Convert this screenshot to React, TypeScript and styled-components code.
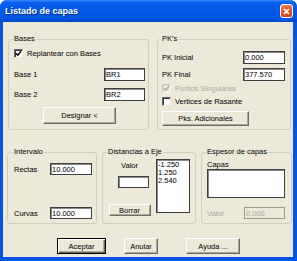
import styled, { createGlobalStyle } from 'styled-components'

const GlobalStyle = createGlobalStyle`
    html, body {
        margin: 0;
        padding: 0;
        background: #ffffff;
    }
    body {
        font-family: "Liberation Sans", Arial, sans-serif;
        font-size: 7.5px;
        line-height: 9px;
        color: #000;
    }
`

const Window = styled.div`
    width: 297px;
    height: 261px;
    box-sizing: border-box;
    display: flex;
    flex-direction: column;
    background: #0055e5;
    border-radius: 7px 7px 0 0;
    overflow: hidden;
`

const TitleBar = styled.div`
    height: 22px;
    flex-shrink: 0;
    display: flex;
    align-items: center;
    justify-content: space-between;
    padding: 0 4px 0 5px;
    background: linear-gradient(180deg, #3b8cff 0%, #0c62ee 10%, #0058e6 45%, #0055e3 85%, #0047cc 100%);
`

const Title = styled.span`
    color: #fff;
    font-weight: bold;
    font-size: 9px;
    line-height: 11px;
    text-shadow: 1px 1px 0 #0a2a8a;
`

const CloseButton = styled.div`
    width: 13px;
    height: 14px;
    box-sizing: border-box;
    border: 1px solid #fff;
    border-radius: 3px;
    background: linear-gradient(160deg, #f08a63 0%, #e0562c 50%, #c63d17 100%);
    display: flex;
    align-items: center;
    justify-content: center;
`

const Body = styled.div`
    flex: 1;
    margin: 0 4px 4px 3px;
    background: #ece9d8;
    display: flex;
    flex-direction: column;
    padding: 13px 0 0;
`

const TopRow = styled.div`
    display: flex;
    gap: 8px;
    padding-left: 5px;
`

const MidRow = styled.div`
    display: grid;
    grid-template-columns: 90px 94px 91px;
    column-gap: 5px;
    padding-left: 4px;
    margin-top: 18px;
`

const ButtonRow = styled.div`
    display: flex;
    padding-left: 54px;
    margin-top: 14px;
`

const Group = styled.fieldset<{ $w?: number; $pl: number; $pr: number; $pb: number }>`
    margin: 0;
    ${p => (p.$w ? `width: ${p.$w}px;` : '')}
    box-sizing: border-box;
    min-width: 0;
    padding: 0 ${p => p.$pr}px ${p => p.$pb}px ${p => p.$pl}px;
    border: 1px solid #d0d0bf;
    border-radius: 3px;
    display: flex;
    flex-direction: column;
`

const Legend = styled.legend`
    padding: 0 1px;
    margin-left: -1px;
    line-height: 8px;
`

const FieldRow = styled.div<{ $mt: number; $center?: boolean }>`
    display: flex;
    align-items: center;
    justify-content: ${p => (p.$center ? 'center' : 'space-between')};
    margin-top: ${p => p.$mt}px;
`

const Label = styled.span<{ $disabled?: boolean }>`
    color: ${p => (p.$disabled ? '#aca899' : '#000')};
    white-space: nowrap;
`

const TextBox = styled.input<{ $w: number; $h: number; $mt?: number; $ml?: number }>`
    width: ${p => p.$w}px;
    height: ${p => p.$h}px;
    margin: ${p => p.$mt ?? 0}px 0 0 ${p => p.$ml ?? 0}px;
    box-sizing: border-box;
    padding: 0 1px;
    font: inherit;
    color: #000;
    background: #fff;
    border: 1px solid #3f3f3f;
    box-shadow: inset 1px 1px 0 #8a8a8a;
    outline: none;

    &:disabled {
        background: #ece9d8;
        color: #aca899;
        border-color: #9d9a8c;
        box-shadow: none;
    }
`

const CheckRow = styled.label<{ $mt: number; $disabled?: boolean }>`
    display: flex;
    align-items: center;
    gap: 4px;
    margin-top: ${p => p.$mt}px;
    color: ${p => (p.$disabled ? '#aca899' : '#000')};
    white-space: nowrap;
`

const CheckBox = styled.span<{ $disabled?: boolean }>`
    width: 9px;
    height: 9px;
    box-sizing: border-box;
    flex-shrink: 0;
    display: flex;
    align-items: center;
    justify-content: center;
    background: ${p => (p.$disabled ? '#ece9d8' : '#fff')};
    border: 1px solid;
    border-color: ${p => (p.$disabled ? '#c9c6b8 #f5f4ee #f5f4ee #c9c6b8' : '#6a6a6a #e6e6e6 #e6e6e6 #6a6a6a')};
    box-shadow: inset 1px 1px 0 ${p => (p.$disabled ? '#dcd9cc' : '#3a3a3a')};
`

const Button = styled.div<{ $w: number; $h: number; $mt?: number; $ml?: number; $default?: boolean }>`
    width: ${p => p.$w}px;
    height: ${p => p.$h}px;
    margin: ${p => p.$mt ?? 0}px 0 0 ${p => p.$ml ?? 0}px;
    box-sizing: border-box;
    flex-shrink: 0;
    display: flex;
    align-items: center;
    justify-content: center;
    background: #ece9d8;
    border: 1px solid;
    border-color: ${p => (p.$default ? '#000' : '#fff #6e6c62 #6e6c62 #fff')};
    box-shadow: ${p =>
        p.$default
            ? 'inset 1px 1px 0 #fff, inset -1px -1px 0 #6e6c62, inset -2px -2px 0 #aca899'
            : 'inset -1px -1px 0 #aca899'};
    white-space: nowrap;
`

const DistBody = styled.div`
    display: flex;
    justify-content: space-between;
`

const DistLeft = styled.div`
    width: 43px;
    display: flex;
    flex-direction: column;
    align-items: center;
`

const ListBox = styled.div<{ $w: number; $h: number; $mt: number }>`
    width: ${p => p.$w}px;
    height: ${p => p.$h}px;
    margin-top: ${p => p.$mt}px;
    box-sizing: border-box;
    padding: 1px 1px;
    background: #fff;
    border: 1px solid #3f3f3f;
    box-shadow: inset 1px 1px 0 #8a8a8a;
    display: flex;
    flex-direction: column;
    line-height: 8px;
`

const Caption = styled.span<{ $mt: number }>`
    margin-top: ${p => p.$mt}px;
    white-space: nowrap;
`

const Check = ({ color }: { color: string }) => (
    <svg width="7" height="7" viewBox="0 0 7 7">
        <path d="M1 3.3 L2.8 5.2 L6 1.3" fill="none" stroke={color} strokeWidth="1.4" />
    </svg>
)

const App = () => {
    return (
        <>
            <GlobalStyle />
            <Window>
                <TitleBar>
                    <Title>Listado de capas</Title>
                    <CloseButton>
                        <svg width="7" height="7" viewBox="0 0 7 7">
                            <path d="M1 1 L6 6 M6 1 L1 6" stroke="#fff" strokeWidth="1.6" />
                        </svg>
                    </CloseButton>
                </TitleBar>
                <Body>
                    <TopRow>
                        <Group $w={141} $pl={5} $pr={3} $pb={4}>
                            <Legend>Bases</Legend>
                            <CheckRow $mt={6}>
                                <CheckBox><Check color="#000" /></CheckBox>
                                Replantear con Bases
                            </CheckRow>
                            <FieldRow $mt={10}>
                                <Label>Base 1</Label>
                                <TextBox $w={41} $h={13} defaultValue="BR1" />
                            </FieldRow>
                            <FieldRow $mt={7}>
                                <Label>Base 2</Label>
                                <TextBox $w={41} $h={13} defaultValue="BR2" />
                            </FieldRow>
                            <FieldRow $mt={6} $center>
                                <Button $w={73} $h={17}>Designar &lt;</Button>
                            </FieldRow>
                        </Group>
                        <Group $w={134} $pl={4} $pr={5} $pb={3}>
                            <Legend>PK's</Legend>
                            <FieldRow $mt={8}>
                                <Label>PK Inicial</Label>
                                <TextBox $w={42} $h={13} defaultValue="0.000" />
                            </FieldRow>
                            <FieldRow $mt={4}>
                                <Label>PK Final</Label>
                                <TextBox $w={42} $h={13} defaultValue="377.570" />
                            </FieldRow>
                            <CheckRow $mt={3} $disabled>
                                <CheckBox $disabled><Check color="#aca899" /></CheckBox>
                                Puntos Singulares
                            </CheckRow>
                            <CheckRow $mt={4}>
                                <CheckBox />
                                Vertices de Rasante
                            </CheckRow>
                            <Button $w={87} $h={15} $mt={5}>Pks. Adicionales</Button>
                        </Group>
                    </TopRow>

                    <MidRow>
                        <Group $pl={6} $pr={4} $pb={4}>
                            <Legend>Intervalo</Legend>
                            <FieldRow $mt={7}>
                                <Label>Rectas</Label>
                                <TextBox $w={42} $h={12} defaultValue="10.000" />
                            </FieldRow>
                            <FieldRow $mt={32}>
                                <Label>Curvas</Label>
                                <TextBox $w={42} $h={12} defaultValue="10.000" />
                            </FieldRow>
                        </Group>
                        <Group $pl={5} $pr={5} $pb={4}>
                            <Legend>Distancias a Eje</Legend>
                            <DistBody>
                                <DistLeft>
                                    <Caption $mt={5}>Valor</Caption>
                                    <TextBox $w={31} $h={12} $mt={6} $ml={8} />
                                    <Button $w={42} $h={12} $mt={16}>Borrar</Button>
                                </DistLeft>
                                <ListBox $w={34} $h={54} $mt={3}>
                                    <span>-1.250</span>
                                    <span>1.250</span>
                                    <span>2.540</span>
                                </ListBox>
                            </DistBody>
                        </Group>
                        <Group $pl={5} $pr={6} $pb={4}>
                            <Legend>Espesor de capas</Legend>
                            <Caption $mt={4}>Capas</Caption>
                            <ListBox $w={78} $h={29} $mt={0} />
                            <FieldRow $mt={9}>
                                <Label $disabled>Valor</Label>
                                <TextBox $w={41} $h={12} defaultValue="0.000" disabled />
                            </FieldRow>
                        </Group>
                    </MidRow>

                    <ButtonRow>
                        <Button $w={49} $h={16} $default>Aceptar</Button>
                        <Button $w={34} $h={16} $ml={18}>Anular</Button>
                        <Button $w={54} $h={16} $ml={28}>Ayuda ...</Button>
                    </ButtonRow>
                </Body>
            </Window>
        </>
    )
}

export default App
